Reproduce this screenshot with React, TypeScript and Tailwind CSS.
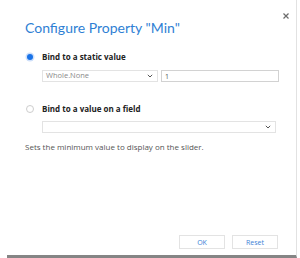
import React from "react";

function Chevron() {
  return (
    <svg width="6" height="4" viewBox="0 0 6 4" fill="none">
      <path d="M0.8 0.8 L3 3 L5.2 0.8" stroke="#555" strokeWidth="1" />
    </svg>
  );
}

export default function App() {
  return (
    <div
      className="w-[300px] h-[258px] bg-white overflow-hidden"
      style={{ fontFamily: '"Open Sans", "Noto Sans", sans-serif' }}
    >
      <div className="ml-[7px] w-[290px] h-[258px] border-r border-r-[#e2e2e2] border-b-[3px] border-b-[#858585] flex flex-col relative">
        <svg className="absolute right-[7px] top-[13px]" width="6" height="6" viewBox="0 0 6 6">
          <path d="M0.5 0.5 L5.5 5.5 M5.5 0.5 L0.5 5.5" stroke="#6b6b6b" strokeWidth="1.2" />
        </svg>
        <div
          className="pl-[18px] mt-[18px] h-[20px] text-[#2f7fd4] text-[14px] leading-[20px] whitespace-nowrap"
          style={{ fontFamily: 'Lato, "Open Sans", sans-serif' }}
        >
          Configure Property "Min"
        </div>
        <div className="pl-[19px] mt-[14px] h-[10px] flex items-center">
          <span className="w-[8px] h-[8px] flex items-center justify-center">
            <span className="w-[6px] h-[6px] rounded-full bg-[#1a73e8] ring-[1.5px] ring-[#cfe0fa]" />
          </span>
          <span className="ml-[8px] text-[8px] font-bold text-[#222] leading-none whitespace-nowrap">Bind to a static value</span>
        </div>
        <div className="pl-[35px] mt-[8px] flex gap-[3px]">
          <div className="w-[116px] h-[12px] border border-[#e3e3e3] flex items-center justify-between pl-[3px] pr-[4px]">
            <span className="text-[7.5px] text-[#8a8a8a] leading-none">Whole.None</span>
            <Chevron />
          </div>
          <div className="w-[118px] h-[12px] border border-[#d2d2d2] flex items-center px-[3px]">
            <span className="text-[7px] text-[#555] leading-none">1</span>
          </div>
        </div>
        <div className="pl-[19px] mt-[22px] h-[10px] flex items-center">
          <span className="w-[8px] h-[8px] rounded-full border border-[#cdcdcd] bg-white" />
          <span className="ml-[8px] text-[8px] font-bold text-[#222] leading-none whitespace-nowrap">Bind to a value on a field</span>
        </div>
        <div className="pl-[35px] mt-[7px]">
          <div className="w-[234px] h-[12px] border border-[#e3e3e3] flex items-center justify-end pr-[4px]">
            <Chevron />
          </div>
        </div>
        <div className="pl-[18px] mt-[9px] h-[10px] text-[8px] text-[#555] leading-[10px] whitespace-nowrap">
          Sets the minimum value to display on the slider.
        </div>
        <div className="mt-auto mb-[6px] flex justify-end gap-[7px] pr-[18px]">
          <button className="w-[46px] h-[14px] border border-[#e3e3e3] text-[7px] text-[#3b82d6] leading-none flex items-center justify-center">OK</button>
          <button className="w-[46px] h-[14px] border border-[#e3e3e3] text-[7px] text-[#3b82d6] leading-none flex items-center justify-center">Reset</button>
        </div>
      </div>
    </div>
  );
}
